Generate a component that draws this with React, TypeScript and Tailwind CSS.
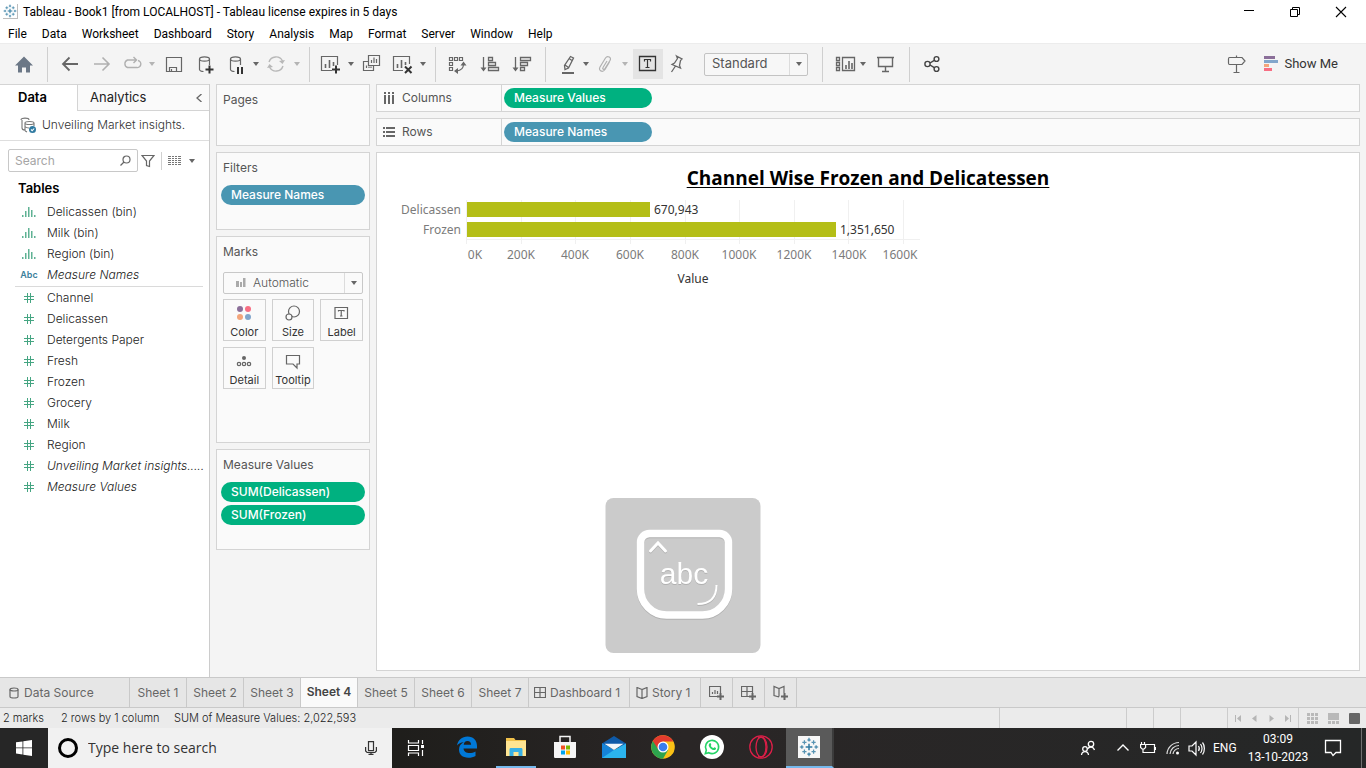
import type { ReactNode } from "react";

/* ---------- shared pieces ---------- */

function Glyph({ children, size = 24, color = "#666666", width = 1.4 }: { children: ReactNode; size?: number; color?: string; width?: number }) {
  return (
    <svg className="shrink-0" width={size} height={size} viewBox={`0 0 ${size} ${size}`} fill="none" stroke={color} strokeWidth={width} aria-hidden="true">
      {children}
    </svg>
  );
}

function Caret({ muted = false }: { muted?: boolean }) {
  return (
    <svg className="shrink-0" width="6" height="4" viewBox="0 0 6 4" fill={muted ? "#b4b4b4" : "#666666"} aria-hidden="true">
      <path d="M0 0h6L3 4z" />
    </svg>
  );
}

function TableauMark({ size, color = "#2f7aa1" }: { size: number; color?: string }) {
  return (
    <svg className="shrink-0" width={size} height={size} viewBox="0 0 24 24" stroke={color} fill="none" strokeWidth="1.6" aria-hidden="true">
      <path d="M12 8v8M8 12h8" strokeWidth="1.8" />
      <path d="M12 1v4.500M10 3.500h4M12 18.500v4.500M10 20.500h4M3.500 10v4M1 12h4.500M20.500 10v4M18.500 12h4.500" strokeWidth="1.3" />
      <path d="M6.500 4v5M4 6.500h5M17.500 4v5M15 6.500h5M6.500 15v5M4 17.500h5M17.500 15v5M15 17.500h5" strokeWidth="1.500" opacity=".8" />
    </svg>
  );
}

function ToolButton({ label, className, children }: { label: string; className: string; children: ReactNode }) {
  return (
    <button type="button" aria-label={label} title={label} className={`flex h-[30px] shrink-0 items-center justify-center ${className}`}>
      {children}
    </button>
  );
}

function Divider({ className }: { className: string }) {
  return (
    <span className={`flex h-[35px] shrink-0 justify-center ${className}`}>
      <span className="w-px bg-[#cfcfcf]" />
    </span>
  );
}

/* ---------- window chrome ---------- */

function TitleBar() {
  return (
    <header className="flex h-[23px] items-center bg-white pl-[3px] text-xs text-black">
      <span className="mr-[5px] flex size-[15px] items-center justify-center border-r border-b border-[#bdbdbd]">
        <TableauMark size={14} />
      </span>
      <h1 className="flex-1 whitespace-nowrap">Tableau - Book1 [from LOCALHOST] - Tableau license expires in 5 days</h1>
      <div className="flex pr-0.5">
        <button type="button" aria-label="Minimize" className="flex w-[46px] justify-center">
          <Glyph size={12} color="#000" width={1}><path d="M1 4.500h10" /></Glyph>
        </button>
        <button type="button" aria-label="Restore" className="flex w-[46px] justify-center">
          <Glyph size={12} color="#000" width={1}><path d="M1.500 3.500h7v7h-7zM3.500 3.500v-2h7v7h-2" /></Glyph>
        </button>
        <button type="button" aria-label="Close" className="flex w-[46px] justify-center">
          <Glyph size={12} color="#000" width={1.1}><path d="M1 1l10 10M11 1L1 11" /></Glyph>
        </button>
      </div>
    </header>
  );
}

const menus = ["File", "Data", "Worksheet", "Dashboard", "Story", "Analysis", "Map", "Format", "Server", "Window", "Help"];

function MenuBar() {
  return (
    <nav className="flex h-5 items-center gap-[15px] bg-white pt-0.5 pl-2 text-xs text-black">
      {menus.map((m) => (
        <button type="button" key={m}>{m}</button>
      ))}
    </nav>
  );
}

function Toolbar() {
  return (
    <div className="flex h-[41px] items-center border-t border-[#ececec] bg-[#f4f4f4] pl-2">
      <ToolButton label="Start page" className="w-8">
        <Glyph><path d="M12 4.500l9 9h-3v7h-4v-5h-4v5H6v-7H3z" fill="#6b7786" stroke="none" /></Glyph>
      </ToolButton>
      <Divider className="w-3.5" />
      <ToolButton label="Undo" className="w-8"><Glyph width={1.8}><path d="M20 12H5M11.500 5.500L5 12l6.500 6.500" /></Glyph></ToolButton>
      <ToolButton label="Redo" className="w-8"><Glyph width={1.6} color="#b0b0b0"><path d="M4 12h15M12.500 5.500L19 12l-6.500 6.500" /></Glyph></ToolButton>
      <ToolButton label="Replay" className="w-7"><Glyph width={1.4} color="#b0b0b0"><path d="M18 8.500a3.500 3.500 0 0 1-1.500 7h-9a4 4 0 0 1 0-7.500H16M13.500 5l3 3-3 3" /></Glyph></ToolButton>
      <ToolButton label="Replay options" className="w-3"><Caret muted /></ToolButton>
      <ToolButton label="Save" className="w-8"><Glyph width={1.200}><path d="M4.500 5.500h15v14h-15zM7.500 19.500v-4h7v4M9.500 17v2.500" /></Glyph></ToolButton>
      <ToolButton label="New data source" className="w-[30px]">
        <Glyph width={1.200}>
          <path d="M6.500 7v10.500c0 1 2 2 4 2M16.500 7v6" /><ellipse cx="11.5" cy="7" rx="5" ry="2.200" />
          <path d="M16.500 13.500v8M12.500 17.500h8" stroke="#333" strokeWidth="2" />
        </Glyph>
      </ToolButton>
      <ToolButton label="Pause auto updates" className="w-[30px]">
        <Glyph width={1.200}>
          <path d="M7.500 7v10.500c0 1 2 2 4 2M17.500 7v6" /><ellipse cx="12.5" cy="7" rx="5" ry="2.200" />
          <path d="M15 15v7M19 15v7" stroke="#333" strokeWidth="2" />
        </Glyph>
      </ToolButton>
      <ToolButton label="Pause options" className="w-3"><Caret /></ToolButton>
      <ToolButton label="Run update" className="w-7">
        <Glyph color="#b8b8b8"><path d="M5 10a7.300 7.300 0 0 1 13.500-1M19 14a7.300 7.300 0 0 1-13.500 1" /><path d="M21 8l-2.500 4L15 9zM3 16l2.500-4L9 15z" fill="#b8b8b8" stroke="none" /></Glyph>
      </ToolButton>
      <ToolButton label="Update options" className="w-3.5"><Caret muted /></ToolButton>
      <Divider className="w-2.5" />
      <ToolButton label="New worksheet" className="w-8">
        <Glyph width={1.200}>
          <path d="M19.500 13V4.500h-16v14H14" /><path d="M7.500 12v4M11.500 8v8M15.500 10v4" strokeWidth="1.600" />
          <path d="M18 13.500v8M14 17.500h8" stroke="#333" strokeWidth="2" />
        </Glyph>
      </ToolButton>
      <ToolButton label="New worksheet options" className="w-2.5"><Caret /></ToolButton>
      <ToolButton label="Duplicate" className="w-[30px]">
        <Glyph width={1.200}><path d="M9.500 3.500h11v10h-11zM9.500 9.500h-5v9h10v-5M12.500 8v3M15 5.500V11M17.500 7v4M7.500 13.500V16M10 14.500V16M12 14.500V16" /></Glyph>
      </ToolButton>
      <ToolButton label="Clear sheet" className="w-8">
        <Glyph width={1.200}>
          <path d="M19.500 12V4.500h-16v14H13" /><path d="M7.500 12v4M11.500 8v8M15.500 10v3" strokeWidth="1.600" />
          <path d="M15 14.500l6.500 6.500M21.500 14.500L15 21" stroke="#333" strokeWidth="2" />
        </Glyph>
      </ToolButton>
      <ToolButton label="Clear options" className="w-2.5"><Caret /></ToolButton>
      <Divider className="w-3.5" />
      <ToolButton label="Swap rows and columns" className="w-[30px]">
        <Glyph width={1.200}><path d="M4.500 5.500h3v3h-3zM9.500 5.500h3v3h-3zM14.500 5.500h3v3h-3zM4.500 10.500h3v3h-3zM4.500 15.500h3v3h-3z" /><path d="M18.500 12c0 4-2 6.500-7 7" /><path d="M15.500 13.500l3-4 3 4zM13 16l-4 3 4 3z" fill="#666" stroke="none" /></Glyph>
      </ToolButton>
      <ToolButton label="Sort ascending" className="w-9">
        <Glyph width={1.300}><path d="M5.500 5v12M10.500 5.500h4v3h-4zM10.500 10.500h7v3h-7zM10.500 15.500h10v3h-10z" /><path d="M2.500 15.500h6l-3 4z" fill="#666" stroke="none" /></Glyph>
      </ToolButton>
      <ToolButton label="Sort descending" className="w-7">
        <Glyph width={1.300}><path d="M5.500 5v12M10.500 5.500h10v3h-10zM10.500 10.500h7v3h-7zM10.500 15.500h4v3h-4z" /><path d="M2.500 15.500h6l-3 4z" fill="#666" stroke="none" /></Glyph>
      </ToolButton>
      <Divider className="w-[18px]" />
      <ToolButton label="Highlight" className="w-7">
        <Glyph width={1.300}><path d="M14.500 4.500l3 1.500-5 10-3.500 1.500-.500-4zM9 13l3.500 2.500M13 6.500l3 2" /><path d="M6 21h12" strokeWidth="2" /></Glyph>
      </ToolButton>
      <ToolButton label="Highlight options" className="w-2"><Caret /></ToolButton>
      <ToolButton label="Group members" className="w-[30px]">
        <Glyph width={1.200} color="#b0b0b0"><path d="M16.500 10l-4.500 7.500c-2.500 3.500-7 1-5-2.500l5.500-9c2-3 6.500-.500 4.500 2.500l-5 8c-1 1.500-3 .500-2-1l4-6.500" /></Glyph>
      </ToolButton>
      <ToolButton label="Group options" className="w-2.5"><Caret muted /></ToolButton>
      <ToolButton label="Show mark labels" className="ml-[3px] w-[30px] bg-[#e4e4e4]">
        <Glyph color="#333" width={1.300}><path d="M3.500 4.500h16v14h-16z" /><path d="M8.500 9.500v-2h6v2M11.500 7.500v8M9.500 15.500h4" strokeWidth="1.200" /></Glyph>
      </ToolButton>
      <ToolButton label="Fix axes" className="w-7">
        <Glyph width={1.300}><path d="M11.500 4l5.500 3-1.500 1.500-1 5 1 2.500-8.500-3.500 2.500-1.500 3-4.500zM10.500 14l-4 6" /></Glyph>
      </ToolButton>
      <label className="ml-[13px] flex h-[23px] w-[104px] shrink-0 items-center rounded-xs border border-[#c3c3c3] bg-[#f7f7f7] text-[#555]">
        <select aria-label="Fit" className="min-w-0 flex-1 appearance-none bg-transparent pl-[7px] text-[13px] outline-none">
          <option>Standard</option>
        </select>
        <span className="flex h-full w-[18px] items-center justify-center border-l border-[#dcdcdc]"><Caret /></span>
      </label>
      <Divider className="w-7" />
      <ToolButton label="Show/hide cards" className="w-5">
        <Glyph width={1.300}><path d="M2.500 5.500h3v3h-3zM2.500 10.500h3v3h-3zM2.500 15.500h3v3h-3zM8.500 5.500h12v13h-12z" /><path d="M12 13v4M15 9v8M18 11v6" strokeWidth="1.600" /></Glyph>
      </ToolButton>
      <ToolButton label="Card options" className="w-3.5"><Caret /></ToolButton>
      <ToolButton label="Presentation mode" className="w-[30px]">
        <Glyph><path d="M4 5.500h17M5.500 5.500v9h14v-9M12.500 14.500v5M9 19.500h7" /></Glyph>
      </ToolButton>
      <Divider className="w-[18px]" />
      <ToolButton label="Share" className="w-7">
        <Glyph color="#444"><circle cx="7.500" cy="12" r="2.600" /><circle cx="16.500" cy="7" r="2.400" /><circle cx="16.500" cy="17" r="2.400" /><path d="M10 11l4.300-2.700M10 13l4.300 2.700" /></Glyph>
      </ToolButton>
      <div className="ml-auto flex items-center pr-7">
        <ToolButton label="Data guide" className="mr-3.5 w-7">
          <Glyph width={1.200}><path d="M12.500 3.500v2M12.500 12.500v8M9.500 20.500h6M5.500 5.500h12.500l3 3.500-3 3.500H5.500c-1 0-1-.500-1-1.500V7c0-1 0-1.500 1-1.500z" /></Glyph>
        </ToolButton>
        <button type="button" className="flex items-center gap-[5px] font-['Roboto',sans-serif] text-[13px] text-[#333]">
          <svg width="15" height="16" viewBox="0 0 15 16" aria-hidden="true">
            <path fill="#8b6f99" d="M0 0h11v3H0z" /><path fill="#82a6cb" d="M0 4h14v3H0z" /><path fill="#f3a57b" d="M0 8h5v3H0z" /><path fill="#f76e83" d="M0 12h8v3H0z" />
          </svg>
          Show Me
        </button>
      </div>
    </div>
  );
}

/* ---------- data pane ---------- */

type Field = { name: string; kind: "bin" | "abc" | "num"; italic?: boolean };

const dimensions: Field[] = [
  { name: "Delicassen (bin)", kind: "bin" },
  { name: "Milk (bin)", kind: "bin" },
  { name: "Region (bin)", kind: "bin" },
  { name: "Measure Names", kind: "abc", italic: true },
];

const measures: Field[] = [
  { name: "Channel", kind: "num" },
  { name: "Delicassen", kind: "num" },
  { name: "Detergents Paper", kind: "num" },
  { name: "Fresh", kind: "num" },
  { name: "Frozen", kind: "num" },
  { name: "Grocery", kind: "num" },
  { name: "Milk", kind: "num" },
  { name: "Region", kind: "num" },
  { name: "Unveiling Market insights.....", kind: "num", italic: true },
  { name: "Measure Values", kind: "num", italic: true },
];

function FieldIcon({ kind }: { kind: Field["kind"] }) {
  if (kind === "abc") return <span className="text-[9px] font-semibold text-[#3c7f9c]">Abc</span>;
  if (kind === "bin")
    return (
      <svg width="14" height="10" viewBox="0 0 14 10" fill="#5fb294" aria-hidden="true">
        <path d="M0 8h1.500v2H0zM3 4h1.500v6H3zM6 0h1.500v10H6zM9 3h1.500v7H9zM12 8h1.500v2H12z" />
      </svg>
    );
  return (
    <svg width="10" height="10" viewBox="0 0 10 10" stroke="#45a582" strokeWidth="1" aria-hidden="true">
      <path d="M3.500 0v10M6.500 0v10M0 3.500h10M0 6.500h10" />
    </svg>
  );
}

function FieldList({ fields }: { fields: Field[] }) {
  return (
    <ul>
      {fields.map((f) => (
        <li key={f.name} className="flex h-[21px] items-center">
          <span className="flex w-7 shrink-0 justify-center">{<FieldIcon kind={f.kind} />}</span>
          <span className={`ml-1 whitespace-nowrap ${f.italic ? "italic" : ""}`}>{f.name}</span>
        </li>
      ))}
    </ul>
  );
}

function DataPane() {
  return (
    <aside className="w-[210px] shrink-0 border-r border-[#cccccc] bg-white text-xs text-[#222]">
      <div className="flex h-[27px] border-t border-[#d4d4d4]">
        <button type="button" className="w-[77px] pr-3 text-[13px] font-semibold text-black">Data</button>
        <button type="button" className="flex flex-1 items-center justify-between border-b border-l border-[#d4d4d4] bg-[#fafafa] pr-1.5 pl-3 text-[13px]">
          Analytics
          <Glyph size={8} width={1.300}><path d="M6.500 0L2 4l4.500 4" /></Glyph>
        </button>
      </div>
      <div className="flex h-[30px] items-center gap-1.5 border-b border-[#dedede] pb-0.5 pl-5 font-light text-[#333]">
        <Glyph size={16} width={1.100} color="#777">
          <path d="M2 3v8c0 1 1 2 3 2M1 3c0-2.500 8-2.500 8 0M5 5.500v8c0 .500 1 1 2 1.500M5 6c0-2 9-2 9 0s-9 2-9 0M14 6v3M5 9.500c1 1.500 3 1.500 4 1.500" />
          <circle cx="12.500" cy="12.500" r="3.500" fill="#2f7aa1" stroke="none" /><path d="M11 12.500l1.200 1.200 2-2.200" stroke="#fff" />
        </Glyph>
        <span className="whitespace-nowrap">Unveiling Market insights.</span>
      </div>
      <div className="mt-2 flex h-[23px] items-center pl-2">
        <label className="flex h-full w-[130px] items-center rounded-xs border border-[#c8c8c8] pr-1.5 pl-1.5">
          <input aria-label="Search" placeholder="Search" className="min-w-0 flex-1 outline-none placeholder:text-[#a5a5a5]" />
          <Glyph size={11} width={1.200}><circle cx="6.500" cy="4.500" r="3.500" /><path d="M4 7L.500 10.500" /></Glyph>
        </label>
        <button type="button" aria-label="Filter fields" className="ml-[3px]"><Glyph size={14} width={1.200}><path d="M1 1.500h12L8.500 7v5.500l-3-1V7z" /></Glyph></button>
        <span className="mx-1.5 h-[18px] w-px bg-[#d0d0d0]" />
        <button type="button" aria-label="View options" className="flex items-center gap-2">
          <svg width="13" height="10" viewBox="0 0 13 10" fill="#777" aria-hidden="true">
            <path d="M0 0h3v1H0zM4 0h2v1H4zM7 0h2v1H7zM10 0h3v1h-3zM0 2h3v1H0zM4 2h2v1H4zM7 2h2v1H7zM10 2h3v1h-3zM0 4h3v1H0zM4 4h2v1H4zM7 4h2v1H7zM10 4h3v1h-3zM0 6h3v1H0zM4 6h2v1H4zM7 6h2v1H7zM10 6h3v1h-3zM0 8h3v1H0zM4 8h2v1H4zM7 8h2v1H7zM10 8h3v1h-3z" />
          </svg>
          <Caret />
        </button>
      </div>
      <h2 className="mt-1.5 pl-[18px] text-[13px] leading-5 font-semibold text-black">Tables</h2>
      <div className="mt-[3px] pr-1.5 pl-[15px] font-light">
        <FieldList fields={dimensions} />
        <hr className="mt-px border-[#dadada]" />
        <FieldList fields={measures} />
      </div>
    </aside>
  );
}

/* ---------- cards ---------- */

function Card({ title, className, children }: { title: string; className: string; children?: ReactNode }) {
  return (
    <section className={`border border-[#d4d4d4] bg-[#fafafa] px-1 pt-1.5 ${className}`}>
      <h2 className="px-0.5 leading-[18px] text-[#555]">{title}</h2>
      {children}
    </section>
  );
}

function Pill({ tone, className = "", children }: { tone: "green" | "blue"; className?: string; children: ReactNode }) {
  return (
    <button type="button" className={`block h-5 rounded-full px-2.5 text-left font-medium whitespace-nowrap text-white ${tone === "green" ? "bg-[#00b180]" : "bg-[#4996b2]"} ${className}`}>
      {children}
    </button>
  );
}

function MarkButton({ label, children }: { label: string; children: ReactNode }) {
  return (
    <button type="button" className="flex h-[42px] flex-col items-center justify-between border border-[#d0d0d0] pt-1 text-[11px] leading-4 text-[#333]">
      <Glyph size={18} width={1.200}>{children}</Glyph>
      {label}
    </button>
  );
}

function Cards() {
  return (
    <div className="flex w-[154px] shrink-0 flex-col gap-1.5 text-xs">
      <Card title="Pages" className="h-[62px]" />
      <Card title="Filters" className="h-[78px]">
        <Pill tone="blue" className="mt-2 w-full">Measure Names</Pill>
      </Card>
      <Card title="Marks" className="h-[207px]">
        <div className="mt-[11px] px-0.5">
          <label className="flex h-[22px] items-center rounded-xs border border-[#c8c8c8] pl-3 text-[#555]">
            <svg width="10" height="10" viewBox="0 0 10 10" fill="#aaaaaa" aria-hidden="true"><path d="M0 3h3v6H0zM4 4h2v5H4zM7 0h2.500v9H7z" /></svg>
            <select aria-label="Mark type" className="min-w-0 flex-1 appearance-none bg-transparent pl-[7px] font-light outline-none"><option>Automatic</option></select>
            <span className="flex h-full w-[18px] items-center justify-center border-l border-[#dcdcdc]"><Caret /></span>
          </label>
          <div className="mt-[5px] grid grid-cols-3 gap-1.5">
            <MarkButton label="Color">
              <g stroke="none"><circle cx="5" cy="5" r="3" fill="#8b6f99" /><circle cx="13" cy="5" r="3" fill="#f76e83" /><circle cx="5" cy="13" r="3" fill="#f3a57b" /><circle cx="13" cy="13" r="3" fill="#82a6cb" /></g>
            </MarkButton>
            <MarkButton label="Size"><circle cx="10" cy="7.500" r="5.500" /><circle cx="5" cy="13" r="3" fill="#fafafa" /></MarkButton>
            <MarkButton label="Label"><path d="M2 3.500h12.500v11H2z" /><path d="M5.500 7.500V6.500h5.500v1M8.250 6.500v5.500M7 12h2.500" /></MarkButton>
            <MarkButton label="Detail"><circle cx="9" cy="6" r="2" fill="#666" stroke="none" /><circle cx="4" cy="12" r="1.700" /><circle cx="9" cy="12" r="1.700" /><circle cx="14" cy="12" r="1.700" /></MarkButton>
            <MarkButton label="Tooltip"><path d="M2.500 3.500h13v8.500H13v4l-4-4H2.500z" /></MarkButton>
          </div>
        </div>
      </Card>
      <Card title="Measure Values" className="h-[101px]">
        <Pill tone="green" className="mt-2 w-full">SUM(Delicassen)</Pill>
        <Pill tone="green" className="mt-[3px] w-full">SUM(Frozen)</Pill>
      </Card>
    </div>
  );
}

/* ---------- worksheet view ---------- */

function Shelf({ title, icon, tone, pill }: { title: string; icon: ReactNode; tone: "green" | "blue"; pill: string }) {
  return (
    <div className="flex h-7 items-center border border-[#d4d4d4] bg-[#fafafa]">
      <h2 className="flex h-full w-[125px] items-center gap-1.5 border-r border-[#d4d4d4] pl-1.5 text-[#555]">
        {icon}
        {title}
      </h2>
      <Pill tone={tone} className="ml-0.5 w-[148px]">{pill}</Pill>
    </div>
  );
}

const chartRows = [
  { name: "Delicassen", value: 670943 },
  { name: "Frozen", value: 1351650 },
];

function Chart() {
  const origin = 90;
  const x = (v: number) => Math.round(origin + (v / 1600000) * 437);
  return (
    <svg className="block" width="560" height="100" viewBox="0 0 560 100" fontSize="12" role="img" aria-label="Bar chart of Frozen and Delicassen">
      <g fill="#f0f0f0">
        {[0, 1, 2, 3, 4, 5, 6, 7, 8].map((i) => (
          <rect key={i} x={x(i * 200000) - 1} y="7" width="1" height="44" />
        ))}
        <rect x="89" y="46" width="454" height="1" />
      </g>
      {chartRows.map((r, i) => (
        <g key={r.name}>
          <rect x={origin} y={9 + i * 20} width={x(r.value) - origin} height="15" fill="#b4be17" />
          <text x="84" y={21 + i * 20} textAnchor="end" fill="#7b7b7b">{r.name}</text>
          <text x={x(r.value) + 4} y={21 + i * 20} fill="#333">{r.value.toLocaleString("en-US")}</text>
        </g>
      ))}
      <g fill="#7b7b7b" textAnchor="middle">
        <text x="98" y="66">0K</text>
        <text x="144" y="66">200K</text>
        <text x="198" y="66">400K</text>
        <text x="253" y="66">600K</text>
        <text x="308" y="66">800K</text>
        <text x="362" y="66">1000K</text>
        <text x="417" y="66">1200K</text>
        <text x="472" y="66">1400K</text>
        <text x="523" y="66">1600K</text>
      </g>
      <text x="316" y="90" textAnchor="middle" fill="#333">Value</text>
    </svg>
  );
}

function Worksheet() {
  return (
    <main className="flex min-w-0 flex-1 flex-col gap-1.5 text-xs">
      <Shelf
        title="Columns"
        tone="green"
        pill="Measure Values"
        icon={<svg width="13" height="12" viewBox="0 0 13 12" fill="#666" aria-hidden="true"><path d="M1 0h2v2H1zM1 3h2v9H1zM5 0h2v2H5zM5 3h2v9H5zM9 0h2v2H9zM9 3h2v9H9z" /></svg>}
      />
      <Shelf
        title="Rows"
        tone="blue"
        pill="Measure Names"
        icon={<svg width="13" height="12" viewBox="0 0 13 12" fill="#666" aria-hidden="true"><path d="M0 1h2v2H0zM3 1h9v2H3zM0 5h2v2H0zM3 5h9v2H3zM0 9h2v2H0zM3 9h9v2H3z" /></svg>}
      />
      <section className="mb-1.5 flex-1 border border-[#d4d4d4] bg-white pt-2.5 font-['Noto_Sans','Open_Sans',sans-serif]">
        <h2 className="text-center font-['Open_Sans','Noto_Sans',sans-serif] text-[19px] leading-[30px] font-bold text-black underline decoration-1 underline-offset-2">Channel Wise Frozen and Delicatessen</h2>
        <Chart />
      </section>
    </main>
  );
}

/* ---------- bottom bars ---------- */

const sheets = ["Sheet 1", "Sheet 2", "Sheet 3", "Sheet 4", "Sheet 5", "Sheet 6", "Sheet 7"];
const gridPath = "M.500 .500h11v10h-11zM6 .500v10M.500 5.500h11";
const bookPath = "M6 2.500v9M6 2.500L1 .500v9l5 2 5-2v-9z";

function SheetTabs() {
  return (
    <nav className="flex h-[31px] border-y border-[#c9c9c9] bg-[#e6e6e6] text-xs text-[#666]">
      <button type="button" className="flex w-[130px] items-center gap-1 border-r border-[#c9c9c9] pl-2">
        <Glyph size={12} width={1.200}><path d="M2 2.500v7c0 2 8 2 8 0v-7" /><ellipse cx="6" cy="2.500" rx="4" ry="1.500" /></Glyph>
        Data Source
      </button>
      {sheets.map((s) => (
        <button type="button" key={s} className={`w-[57px] border-r border-[#c9c9c9] whitespace-nowrap ${s === "Sheet 4" ? "bg-[#fafafa] pb-0.5 font-semibold text-[#444]" : ""}`}>
          {s}
        </button>
      ))}
      <button type="button" className="flex w-[101px] items-center gap-1 border-r border-[#c9c9c9] pl-[5px] whitespace-nowrap">
        <Glyph size={12} width={1.200}><path d={gridPath} /></Glyph>
        Dashboard 1
      </button>
      <button type="button" className="flex w-[71px] items-center gap-1 border-r border-[#c9c9c9] pl-1.5 whitespace-nowrap">
        <Glyph size={12} width={1.200}><path d={bookPath} /></Glyph>
        Story 1
      </button>
      <button type="button" aria-label="New worksheet" className="flex w-8 items-center justify-center border-r border-[#c9c9c9]">
        <Glyph size={16} width={1.200}><path d="M11.500 8V1.500H.500v10H9M3.500 7v2M6 5v4M8.500 6v3" /><path d="M11.500 8v7M8 11.500h7" strokeWidth="2" /></Glyph>
      </button>
      <button type="button" aria-label="New dashboard" className="flex w-8 items-center justify-center border-r border-[#c9c9c9]">
        <Glyph size={16} width={1.200}><path d="M11.500 8V1.500H.500v10H8M6 1.500v10M.500 6.500h11" /><path d="M11.500 8v7M8 11.500h7" strokeWidth="2" /></Glyph>
      </button>
      <button type="button" aria-label="New story" className="flex w-8 items-center justify-center border-r border-[#c9c9c9]">
        <Glyph size={16} width={1.200}><path d="M11 8V1.500L6 3.500 1 1.500v9l5 1.500M6 3.500v8" /><path d="M11.500 8v7M8 11.500h7" strokeWidth="2" /></Glyph>
      </button>
    </nav>
  );
}

function StatusBar() {
  return (
    <footer className="flex h-5 items-center bg-[#ebebeb] pl-[3px] text-[11px] font-light text-[#222]">
      <span className="w-[58px]">2 marks</span>
      <span className="w-[113px] whitespace-nowrap">2 rows by 1 column</span>
      <span className="whitespace-nowrap">SUM of Measure Values: 2,022,593</span>
      <div className="ml-auto flex h-full">
        <span className="w-[127px] border-l border-[#cccccc]" />
        <span className="w-[27px] border-l border-[#cccccc]" />
        <span className="w-[27px] border-l border-[#cccccc]" />
        <span className="w-[47px] border-l border-[#cccccc]" />
        <div className="flex w-[71px] items-center justify-around border-l border-[#cccccc] px-0.5">
          <button type="button" aria-label="First"><svg width="7" height="7" viewBox="0 0 7 7" fill="#b5b5b5"><path d="M0 0h1v7H0zM6 0v7L2 3.500z" /></svg></button>
          <button type="button" aria-label="Previous"><svg width="7" height="7" viewBox="0 0 7 7" fill="#b5b5b5"><path d="M5.500 0v7L1 3.500z" /></svg></button>
          <button type="button" aria-label="Next"><svg width="7" height="7" viewBox="0 0 7 7" fill="#b5b5b5"><path d="M1.500 0v7L6 3.500z" /></svg></button>
          <button type="button" aria-label="Last"><svg width="7" height="7" viewBox="0 0 7 7" fill="#b5b5b5"><path d="M6 0h1v7H6zM1 0v7l4-3.500z" /></svg></button>
        </div>
        <div className="flex w-[68px] items-center gap-2.5 border-l border-[#cccccc] pl-2">
          <button type="button" aria-label="Sheet sorter"><svg width="11" height="11" viewBox="0 0 11 11" fill="#b9b9b9"><path d="M0 0h3v3H0zM4 0h3v3H4zM8 0h3v3H8zM0 4h3v3H0zM4 4h3v3H4zM8 4h3v3H8zM0 8h3v3H0zM4 8h3v3H4zM8 8h3v3H8z" /></svg></button>
          <button type="button" aria-label="Filmstrip"><svg width="11" height="11" viewBox="0 0 11 11" fill="#b9b9b9"><path d="M0 0h11v7H0zM0 8h3v3H0zM4 8h3v3H4zM8 8h3v3H8z" /></svg></button>
          <button type="button" aria-label="Tabs" className="size-[11px] rounded-[1px] bg-[#666]" />
        </div>
      </div>
    </footer>
  );
}

/* ---------- desktop taskbar ---------- */

function TaskApp({ label, open = false, active = false, children }: { label: string; open?: boolean; active?: boolean; children: ReactNode }) {
  return (
    <button type="button" aria-label={label} className="flex w-[49px] shrink-0 justify-center">
      <span className={`flex h-10 items-center justify-center border-b-2 ${active ? "w-12 border-r-2 border-r-[#3c3c3c] bg-[#5a5a5a]" : "w-10"} ${open || active ? "border-b-[#76b9ed]" : "border-transparent"}`}>
        <svg width="24" height="24" viewBox="0 0 24 24" aria-hidden="true">{children}</svg>
      </span>
    </button>
  );
}

function Taskbar() {
  return (
    <footer className="flex h-10 items-center bg-linear-to-r from-[#10130d] via-[#2a2626] to-[#252727] font-['Open_Sans','Noto_Sans',sans-serif] text-white">
      <button type="button" aria-label="Start" className="flex h-full w-12 items-center justify-center bg-[#262626]">
        <svg width="16" height="16" viewBox="0 0 16 16" fill="#fff"><path d="M0 2.300L6.500 1.400v6.100H0zM7.300 1.300L16 0v7.500H7.300zM0 8.300h6.500v6.200L0 13.600zM7.300 8.300H16V16l-8.700-1.300z" /></svg>
      </button>
      <label className="flex h-full w-[344px] items-center bg-[#f1f1f1] pr-3.5 pl-2.5">
        <Glyph size={20} color="#000" width={3}><circle cx="10" cy="10" r="8.500" /></Glyph>
        <input aria-label="Search the computer" placeholder="Type here to search" className="ml-2.5 min-w-0 flex-1 bg-transparent text-sm text-[#333] outline-none placeholder:text-[#333]" />
        <Glyph size={14} color="#333" width={1.200}><path d="M4.500 0.600h5v9h-5zM1.600 6v4l1.500 1.500h7.800l1.500-1.500V6M7 11.500v2M4.500 13.400h5" /></Glyph>
      </label>
      <button type="button" aria-label="Task view" className="flex w-12 justify-center">
        <Glyph size={18} color="#fff" width={1.200}><path d="M1.500 1v3h10V1M1.500 6.500h10v5h-10zM1.500 17v-3h10v3M15.500 1v4M15.500 11v6" /><path d="M14 6h3v3h-3z" fill="#fff" stroke="none" /></Glyph>
      </button>
      <div className="flex pl-0.5">
        <TaskApp label="Edge">
          <path fill="#0078d7" d="M2 10.500C3 5 7 1.500 12.500 1.500c6 0 9.500 4 9.500 9.500v2.500H8.500c.200 3 3 4.600 6 4.600 2.200 0 4.200-.600 6-1.700v4.500c-2 1.200-4.500 1.800-7.200 1.800C7.500 22.700 4 19.500 4 14.500 4 11 6 8.500 8.700 7.200 5.800 7.400 3.500 8.500 2 10.500zM8.700 9.800h7.400c0-2.300-1.300-3.800-3.600-3.800S9 7.600 8.700 9.800z" />
        </TaskApp>
        <TaskApp label="File Explorer" open>
          <path fill="#f0c14b" d="M2 3h8l1.500 2H22v4H2z" /><path fill="#ffe592" d="M2 6h20v15H2z" /><path fill="#38b1e6" d="M5.500 21v-6.500c0-1 .500-1.500 1.500-1.500h10c1 0 1.500.500 1.500 1.500V21h-4v-4h-5v4z" />
        </TaskApp>
        <TaskApp label="Microsoft Store">
          <path fill="none" stroke="#f5f5f5" strokeWidth="1.500" d="M7 8V1.500h10V8" /><path fill="#f5f5f5" d="M1 7h22v14.500c0 1-.500 1.500-1.500 1.500h-19C1.500 23 1 22.500 1 21.500z" />
          <path fill="#f25022" d="M8 10.500h4v4H8z" /><path fill="#7fba00" d="M13 10.500h4v4h-4z" /><path fill="#00a4ef" d="M8 15.500h4v4H8z" /><path fill="#ffb900" d="M13 15.500h4v4h-4z" />
        </TaskApp>
        <TaskApp label="Mail">
          <path fill="#0f5aa8" d="M0 8.500L12 1l12 7.500V12H0z" /><path fill="#2bb4ee" d="M0 8.500l12 6.500 12-6.500V23H0z" /><path fill="#1583d8" d="M0 8.500l12 6.500L0 23z" /><path fill="#f2f6fa" d="M2.500 8.700h19L12 15z" />
        </TaskApp>
        <TaskApp label="Chrome">
          <circle cx="12" cy="12" r="11.800" fill="#fbc116" /><path fill="#2da44e" d="M12 12L1.800 6.100A11.800 11.800 0 0 0 12 23.800L17.100 15z" /><path fill="#e33b2e" d="M12 6.500h10.400A11.800 11.800 0 0 0 1.800 6.100L7 14z" />
          <circle cx="12" cy="12" r="5.500" fill="#fff" /><circle cx="12" cy="12" r="4.300" fill="#3b7ded" />
        </TaskApp>
        <TaskApp label="WhatsApp">
          <circle cx="12" cy="12" r="12" fill="#fff" /><path d="M5.300 18.700l1-3.500a6.600 6.600 0 1 1 2.500 2.500z" fill="none" stroke="#25d366" strokeWidth="1.600" />
          <path fill="#25d366" d="M9.500 8.500c.800-.800 1.200-.300 1.800 1.300.100.500-.600.900-.500 1.300.600 1 1.400 1.600 2.400 2 .500 0 .900-1 1.400-.800 1.700.800 1.700 1 1.200 1.900-1.200 1.800-4.200.600-5.800-1.300-1.600-1.800-1.700-3.300-.500-4.400z" />
        </TaskApp>
        <TaskApp label="Opera GX">
          <g fill="none" stroke="#dc1f48" strokeWidth="1.300"><circle cx="12" cy="12" r="11.200" /><ellipse cx="12" cy="12" rx="5" ry="10" /><path d="M9 3c6-3 9 3 9 9s-3 12-9 9" /></g>
        </TaskApp>
        <TaskApp label="Tableau" active>
          <path fill="#f7f7f7" d="M1 1h22v22H1z" /><svg x="2" y="2" width="20" height="20"><TableauMark size={20} /></svg>
        </TaskApp>
      </div>
      <div className="ml-auto flex h-full items-center">
        <button type="button" aria-label="People" className="mr-5"><Glyph size={16} color="#fff" width={1.300}><circle cx="11" cy="4" r="2.700" /><path d="M7.500 9c2-3 6-2.500 7 1" /><circle cx="5" cy="9" r="2.300" /><path d="M1.500 15c.500-4.500 6.500-4.500 7 0" /></Glyph></button>
        <button type="button" aria-label="Hidden icons" className="mr-2.5"><Glyph size={14} color="#fff" width={1.400}><path d="M1.500 9.500L7 4l5.500 5.500" /></Glyph></button>
        <button type="button" aria-label="Battery" className="mr-2.5"><Glyph size={16} color="#fff" width={1.200}><path d="M6 4.500h8.500v8H5.500M15.500 7v3M1.500 2v2.500M4.500 2v2.500M.600 4.500h5v3l-1.500 1.500h-2L.600 7.500zM3 9v3.500h2.500" /></Glyph></button>
        <button type="button" aria-label="Network" className="mr-2"><Glyph size={14} color="#ddd" width={1.200}><path d="M1 13A12 12 0 0 1 13 1.500M4 13a9 9 0 0 1 9-8.500M7 13a6 6 0 0 1 6-5.500" /><circle cx="11.500" cy="12" r="1.500" fill="#fff" stroke="none" /></Glyph></button>
        <button type="button" aria-label="Volume" className="mr-2"><Glyph size={17} color="#fff" width={1.200}><path d="M1 6h3l4-4v13l-4-4H1zM10.500 6c1 1.500 1 3.500 0 5M12.500 4c2 2.500 2 6.500 0 9M14.500 2.500c2.500 3 2.500 9 0 12" /></Glyph></button>
        <span className="w-[34px] font-['Roboto',sans-serif] text-xs">ENG</span>
        <time className="w-[62px] text-center font-['Roboto',sans-serif] text-xs leading-[18px] whitespace-nowrap">03:09<br />13-10-2023</time>
        <button type="button" aria-label="Notifications" className="mr-[19px] ml-[15px]"><Glyph size={18} color="#fff" width={1.300}><path d="M1.500 1.500h15v12H12L9 16.500l-2-3H1.500z" /></Glyph></button>
        <span className="mr-1 h-full w-px bg-[#6f6f6f]" />
      </div>
    </footer>
  );
}

function KeyboardOverlay() {
  return (
    <div className="fixed bottom-[115px] left-1/2 size-[155px] -translate-x-1/2 rounded-lg bg-[#cbcbcb]" role="status" aria-label="Lowercase input">
      <svg width="155" height="155" viewBox="0 0 155 155" fill="none" stroke="#fff">
        <g className="drop-shadow-[0_1px_0_#b0b0b0]">
          <path d="M44 35.500h70a9 9 0 0 1 9 9V91a26 26 0 0 1-26 26H61a26 26 0 0 1-26-26V44.500a9 9 0 0 1 9-9z" strokeWidth="7.500" />
          <path d="M45 53l7.500-8 7.500 8" strokeWidth="3" strokeLinecap="round" />
          <path d="M92 106q19 0 19-19" strokeWidth="2" />
          <text x="78.500" y="86" textAnchor="middle" fill="#fff" stroke="none" fontSize="30" fontFamily="'Liberation Sans', Arial, sans-serif">abc</text>
        </g>
      </svg>
    </div>
  );
}

export default function App() {
  return (
    <div className="flex min-h-screen flex-col bg-[#f4f4f4] font-['Inter','Open_Sans',sans-serif]">
      <div className="font-['Roboto','Open_Sans',sans-serif]">
        <TitleBar />
        <MenuBar />
      </div>
      <Toolbar />
      <div className="flex flex-1 gap-1.5 pr-1.5">
        <DataPane />
        <Cards />
        <Worksheet />
      </div>
      <SheetTabs />
      <StatusBar />
      <Taskbar />
      <KeyboardOverlay />
    </div>
  );
}
